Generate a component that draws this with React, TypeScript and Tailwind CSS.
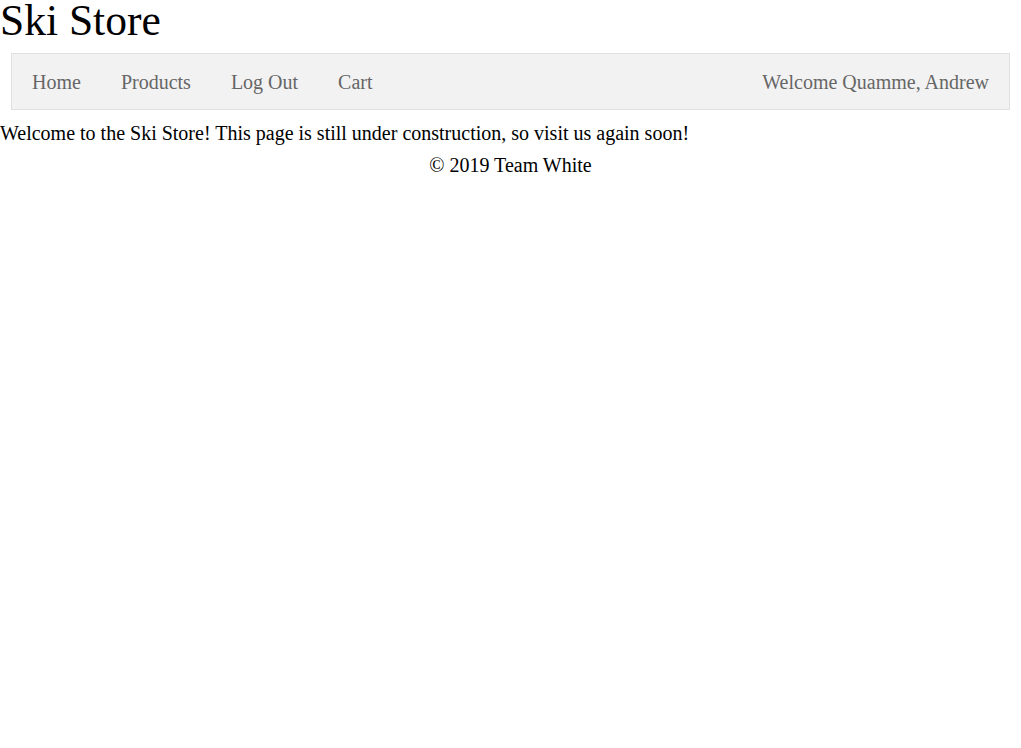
import React from 'react';

const links = ['Home', 'Products', 'Log Out', 'Cart'];

export default function App() {
  return (
    <div className="min-h-screen bg-white text-black font-['Liberation_Serif','Times_New_Roman',serif]">
      <h1 className="text-[43.5px] leading-[36px] pt-[2px] m-0">Ski Store</h1>
      <nav className="mx-[11px] mt-[15px] flex items-center justify-between border border-[#e0e0e0] bg-[#f2f2f2] h-[57px] text-[20px] text-[#666666]">
        <ul className="flex">
          {links.map((l) => (
            <li key={l}>
              <a href="#" className="block px-5">
                {l}
              </a>
            </li>
          ))}
        </ul>
        <a href="#" className="block px-5">
          Welcome Quamme, Andrew
        </a>
      </nav>
      <p className="text-[20px] leading-[24px] mt-[11px]">
        Welcome to the Ski Store! This page is still under construction, so visit us again soon!
      </p>
      <footer className="text-[20px] leading-[24px] mt-[8px] text-center">© 2019 Team White</footer>
    </div>
  );
}
